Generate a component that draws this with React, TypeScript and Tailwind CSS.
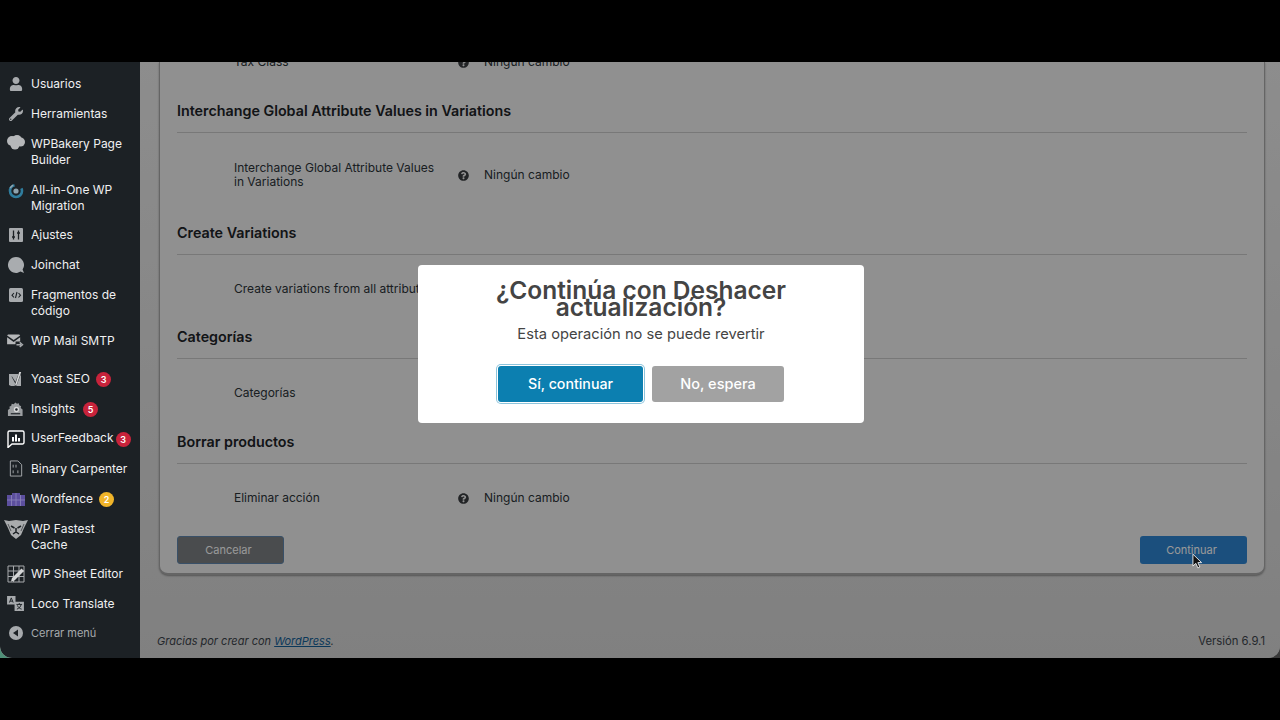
import type { ReactNode } from "react";
import { FaUser, FaWrench, FaQuestionCircle } from "react-icons/fa";

const Usuarios = () => <FaUser className="h-[14px] w-[14px] text-[#a7aaad]" />;
const Tools = () => <FaWrench className="h-[14px] w-[14px] text-[#a7aaad]" />;

const Cloud = () => (
  <svg viewBox="0 0 18 15" className="h-[15px] w-[18px] max-w-none shrink-0 -translate-y-[10px]">
    <g fill="#b5b7b9">
      <circle cx="5" cy="6" r="5" />
      <circle cx="10" cy="5" r="5" />
      <circle cx="13.500" cy="7" r="4.500" />
      <circle cx="8" cy="10" r="4.500" />
    </g>
  </svg>
);

const Swirl = () => (
  <svg viewBox="0 0 16 16" className="h-[16px] w-[16px] shrink-0 -translate-y-[7px]">
    <circle cx="8" cy="8" r="6" fill="none" stroke="#2f7d9e" strokeWidth="2.600" strokeDasharray="26 8" />
    <circle cx="8" cy="8" r="2.600" fill="#8fa3ad" />
    <path d="M2 5 5 2" stroke="#9aa5ab" strokeWidth="1.500" />
  </svg>
);

const Sliders = () => (
  <svg viewBox="0 0 14 14" className="h-[14px] w-[14px] shrink-0">
    <rect width="14" height="14" rx="1" fill="#a7aaad" />
    <path d="M4.500 2.500v9M9.500 2.500v9M3 9h3M8 5h3" stroke="#1c2125" strokeWidth="1.300" />
  </svg>
);

const Bubble = () => (
  <svg viewBox="0 0 18 18" className="h-[18px] w-[18px] max-w-none shrink-0">
    <path d="M9 1a8 8 0 1 0 4.500 14.600L17 17l-1.400-3.500A8 8 0 0 0 9 1z" fill="#a9acaf" />
  </svg>
);

const Code = () => (
  <svg viewBox="0 0 14 14" className="h-[14px] w-[14px] shrink-0 -translate-y-[8px]">
    <rect width="14" height="14" rx="1.500" fill="#a7aaad" />
    <path d="M5 5 3 7.200 5 9.500M8 4 6.500 10M9.500 5l2 2.200-2 2.300" stroke="#1c2125" strokeWidth="1.100" fill="none" />
  </svg>
);

const Mail = () => (
  <svg viewBox="0 0 18 15" className="h-[14px] w-[17px] shrink-0">
    <path d="M0 1.500 1 .5h12l1 1L7 6.500z" fill="#b5b7b9" />
    <path d="M0 3.500 7 8.500l7-5V8H9v3H0z" fill="#b5b7b9" />
    <path d="M10 11.500h5M13.500 9l3 2.500-3 2.500" stroke="#a7aaad" strokeWidth="1.500" fill="none" />
  </svg>
);

const Yoast = () => (
  <svg viewBox="0 0 16 16" className="h-[16px] w-[16px] shrink-0">
    <path d="M1 3h12v12H3l-2-1z" fill="#a7aaad" />
    <path d="M4 5.500 7.500 11 11 1.500h2.500L8.500 14.500H6.500L7.300 12.500 3.500 5.500z" fill="#1c2125" />
    <path d="M11.200 1h2l-4.600 13H7z" fill="#d4d5d6" />
  </svg>
);

const Monster = () => (
  <svg viewBox="0 0 18 18" className="h-[17px] w-[17px] max-w-none shrink-0">
    <path d="M9 1.500l1.500 1.500 2-.5.500 2 2 1-.5 2 2 1.500V16H1v-6.500l2-1.500-.5-2 2-1 .5-2 2 .5z" fill="#9b9ea1" />
    <circle cx="10" cy="9" r="2.800" fill="#d9dadb" />
    <circle cx="10" cy="9" r="1.300" fill="#1c2125" />
    <path d="M4 13.500h10" stroke="#1c2125" strokeWidth="1.200" />
  </svg>
);

const Feedback = () => (
  <svg viewBox="0 0 18 18" className="h-[18px] w-[18px] max-w-none shrink-0">
    <path d="M1 2.500A1.500 1.500 0 0 1 2.500 1h13A1.500 1.500 0 0 1 17 2.500v10a1.500 1.500 0 0 1-1.500 1.500H5l-4 3.500z" fill="none" stroke="#fff" strokeWidth="1.400" />
    <path d="M5 7h2v4.500H5zM8 4.500h2v7H8zM11 8h2v3.500h-2z" fill="#fff" />
  </svg>
);

const Binary = () => (
  <svg viewBox="0 0 14 18" className="h-[17px] w-[14px] shrink-0">
    <path d="M1 1h8l4 4v12H1z" fill="none" stroke="#a7aaad" strokeWidth="1" />
    <path d="M4 5v3M7 5v3M4 11v3M9 11v3" stroke="#a7aaad" strokeWidth="1" />
  </svg>
);

const Wordfence = () => (
  <svg viewBox="0 0 18 14" className="h-[14px] w-[18px] max-w-none shrink-0">
    <path d="M0 3h5V1h8v2h5v11H0z" fill="#5c4f9e" />
    <path d="M4.500 3v11M9 1v13M13.500 3v11M0 8h18" stroke="#8d86bb" strokeWidth=".800" />
  </svg>
);

const Cheetah = () => (
  <svg viewBox="0 0 24 20" className="h-[20px] w-[24px] max-w-none shrink-0 -translate-y-[8px]">
    <path d="M0 1 5 2 12 1 19 2 24 1 20 9 17 16 12 20 7 16 4 9z" fill="#a9abad" />
    <path d="M7 7 10.500 9M17 7 13.500 9M9 15l3-2 3 2M12 9v4" stroke="#1c2125" strokeWidth="1.500" fill="none" />
    <path d="M4 5 7 12M20 5 17 12" stroke="#55585b" strokeWidth="1" />
  </svg>
);

const Sheet = () => (
  <svg viewBox="0 0 18 18" className="h-[18px] w-[18px] max-w-none shrink-0">
    <path d="M1 1h16v16H1zM1 6h16M1 11.500h16M6.500 1v16M12 1v16" fill="none" stroke="#a7aaad" strokeWidth="1" />
    <path d="M5 13 14.500 3.500l2.500 2.500L7.500 15.500l-3.500 1z" fill="#d4d5d6" />
  </svg>
);

const Loco = () => (
  <svg viewBox="0 0 18 16" className="h-[15px] w-[17px] shrink-0">
    <path d="M0 0h9v9H0z" fill="#a7aaad" />
    <path d="M2.500 7 4.500 2l2 5M3.200 5.500h2.600" stroke="#1c2125" strokeWidth="1" fill="none" />
    <path d="M8 6h10v10H8z" fill="#a7aaad" />
    <path d="M10 9h6M13 7.500v1.500M15 9c-.5 2.500-2 4-4.500 5M11 10c.8 2 2.500 3.500 4.500 4" stroke="#1c2125" strokeWidth="1" fill="none" />
  </svg>
);

const Collapse = () => (
  <svg viewBox="0 0 14 14" className="h-[14px] w-[14px] shrink-0">
    <circle cx="7" cy="7" r="7" fill="#a7aaad" />
    <path d="M9 3.500v7L4 7z" fill="#1c2125" />
  </svg>
);

function NavItem({ icon, children, className = "" }: { icon: ReactNode; children: ReactNode; className?: string }) {
  return (
    <div className={`flex items-center py-[7px] pl-[7px] pr-2 text-[12px] leading-4 text-[#f0f0f1] ${className}`}>
      <span className="mr-[7px] flex h-4 w-[17px] shrink-0 items-center justify-center">{icon}</span>
      <span className="min-w-0">{children}</span>
    </div>
  );
}

function Badge({ n, amber, className }: { n: number; amber?: boolean; className: string }) {
  return (
    <span
      className={`inline-flex h-[15px] w-[15px] items-center justify-center rounded-full align-middle text-[9px] font-semibold leading-none text-white ${
        amber ? "bg-[#f0b429]" : "bg-[#c8233b]"
      } ${className}`}
    >
      {n}
    </span>
  );
}

function Sidebar() {
  return (
    <aside className="relative z-10 flex w-[140px] shrink-0 flex-col overflow-hidden rounded-bl-[12px] bg-[#1c2125] pt-[7px]">
      <NavItem icon={<Usuarios />}>Usuarios</NavItem>
      <NavItem icon={<Tools />}>Herramientas</NavItem>
      <NavItem icon={<Cloud />}>WPBakery Page Builder</NavItem>
      <NavItem icon={<Swirl />}>All-in-One WP Migration</NavItem>
      <NavItem icon={<Sliders />} className="-mt-[1px]">
        Ajustes
      </NavItem>
      <NavItem icon={<Bubble />}>Joinchat</NavItem>
      <NavItem icon={<Code />}>Fragmentos de código</NavItem>
      <NavItem icon={<Mail />}>WP Mail SMTP</NavItem>
      <div className="h-[8px]" />
      <NavItem icon={<Yoast />}>
        <span className="whitespace-nowrap">
          Yoast SEO
          <Badge n={3} className="ml-[6px]" />
        </span>
      </NavItem>
      <NavItem icon={<Monster />}>
        <span className="whitespace-nowrap">
          Insights
          <Badge n={5} className="ml-[8px]" />
        </span>
      </NavItem>
      <NavItem icon={<Feedback />} className="-mt-[1px]">
        <span className="whitespace-nowrap">
          UserFeedback
          <Badge n={3} className="ml-[2px]" />
        </span>
      </NavItem>
      <NavItem icon={<Binary />}>Binary Carpenter</NavItem>
      <NavItem icon={<Wordfence />}>
        <span className="whitespace-nowrap">
          Wordfence
          <Badge n={2} amber className="ml-[6px]" />
        </span>
      </NavItem>
      <NavItem icon={<Cheetah />}>
        WP Fastest
        <br />
        Cache
      </NavItem>
      <NavItem icon={<Sheet />} className="-mt-[1px]">
        WP Sheet Editor
      </NavItem>
      <NavItem icon={<Loco />}>Loco Translate</NavItem>
      <div className="flex items-center pl-[7px] pt-[6px] text-[11px] leading-4 text-[#a7aaad]">
        <span className="mr-[7px] flex h-4 w-[17px] shrink-0 items-center justify-center">
          <Collapse />
        </span>
        Cerrar menú
      </div>
    </aside>
  );
}

function Row({ label, className }: { label: string; className: string }) {
  return (
    <div className={`flex items-center text-[12px] leading-[14px] text-[#2c3338] ${className}`}>
      <div className="ml-[57px] w-[216px] shrink-0 pr-[8px]">{label}</div>
      <FaQuestionCircle className="ml-[8px] h-[11px] w-[11px] shrink-0 text-[#3a3d40]" />
      <div className="ml-[15px]">Ningún cambio</div>
    </div>
  );
}

function Section({ title, className, children }: { title: string; className: string; children: ReactNode }) {
  return (
    <section className={className}>
      <h2 className="border-b border-[#c8c8c8] pb-[12px] text-[14.300px] font-semibold leading-[18px] text-[#1d2327]">
        {title}
      </h2>
      {children}
    </section>
  );
}

function Content() {
  return (
    <div className="flex min-w-0 flex-1 flex-col pl-[19px] pr-[15px]">
      <div className="h-[513px] overflow-hidden rounded-b-[9px] border-x border-b-2 border-[#a9a9a9] bg-[#f0f0f1] px-[17px] shadow-[0_1px_2px_rgba(0,0,0,0.35)]">
        <Row label="Tax Class" className="-mt-[7px] h-[14px]" />
        <Section title="Interchange Global Attribute Values in Variations" className="pt-[33px]">
          <Row label="Interchange Global Attribute Values in Variations" className="mt-[28px] h-[28px]" />
        </Section>
        <Section title="Create Variations" className="pt-[35px]">
          <Row label="Create variations from all attributes" className="mt-[27px] h-[14px]" />
        </Section>
        <Section title="Categorías" className="pt-[32px]">
          <Row label="Categorías" className="mt-[27px] h-[14px]" />
        </Section>
        <Section title="Borrar productos" className="pt-[33px]">
          <Row label="Eliminar acción" className="mt-[27px] h-[14px]" />
        </Section>
        <div className="mt-[31px] flex justify-between">
          <button className="h-[28px] w-[107px] rounded-[3px] border border-[#5f86ad] bg-[#7c7f83] pr-[4px] text-[11px] text-white">
            Cancelar
          </button>
          <button className="h-[28px] w-[107px] rounded-[3px] bg-[#2d84d0] pr-[4px] text-[11px] text-white">
            Continuar
          </button>
        </div>
      </div>
      <footer className="flex justify-between pt-[58px] text-[11px] leading-4 text-[#3c434a]">
        <span className="-ml-[2px] italic">
          Gracias por crear con <a className="text-[#135e96] underline">WordPress</a>.
        </span>
        <span className="text-[11.300px]">Versión 6.9.1</span>
      </footer>
    </div>
  );
}

function Dialog() {
  return (
    <div className="absolute left-[418px] top-[203px] z-20 flex h-[158px] w-[446px] flex-col items-center rounded-[4px] bg-white pt-[17px] text-[#444]">
      <h1 className="w-[330px] text-center text-[24.500px] font-semibold leading-[17px]">
        ¿Continúa con Deshacer actualización?
      </h1>
      <p className="mt-[6px] text-[14.700px] leading-6">Esta operación no se puede revertir</p>
      <div className="mt-[20px] flex gap-[9px]">
        <button className="h-[36px] w-[145px] rounded-[3px] bg-[#0c7fb0] text-[14.200px] font-medium text-white ring-1 ring-[#8cc4dc] ring-offset-1">
          Sí, continuar
        </button>
        <button className="h-[36px] w-[132px] rounded-[3px] bg-[#a2a2a2] text-[14.500px] font-medium text-white">
          No, espera
        </button>
      </div>
    </div>
  );
}

function Cursor() {
  return (
    <svg viewBox="0 0 12 18" className="absolute left-[1192px] top-[491px] z-10 h-[17px] w-[11px]">
      <path d="M1 1v13l3.200-3 2.200 5 2.200-1-2.200-4.800H10.500z" fill="#111" stroke="#eee" strokeWidth="1" />
    </svg>
  );
}

export default function App() {
  return (
    <div className="flex h-screen flex-col bg-black" style={{ fontFamily: "Inter, 'Liberation Sans', sans-serif" }}>
      <div className="h-[62px] shrink-0" />
      <div className="h-[596px] shrink-0 bg-gradient-to-r from-[#4f9078] to-[#3a3a3a]">
        <div className="relative flex h-full overflow-hidden rounded-b-[12px] bg-gradient-to-b from-[#ebebeb] to-[#d6d6d6]">
          <Sidebar />
          <Content />
          <div className="absolute inset-0 bg-black/40" />
          <Cursor />
          <Dialog />
        </div>
      </div>
    </div>
  );
}
